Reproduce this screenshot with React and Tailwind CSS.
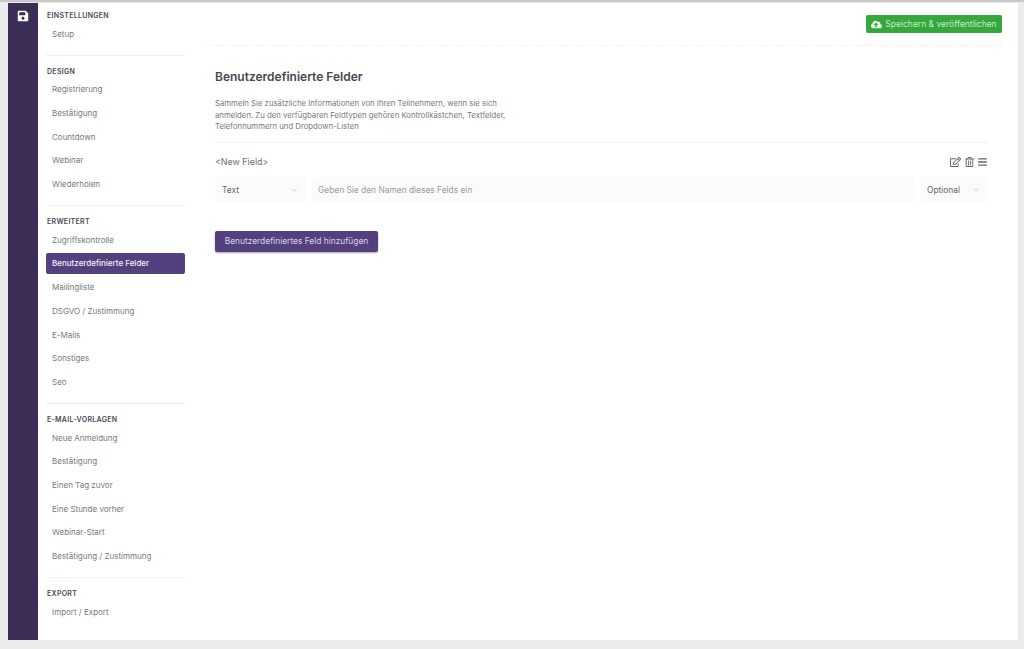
import { ChevronDown } from "lucide-react";
import { FaSave, FaCloudUploadAlt, FaRegEdit, FaRegTrashAlt, FaBars } from "react-icons/fa";

const sections = [
  { title: "Einstellungen", items: ["Setup"] },
  { title: "Design", items: ["Registrierung", "Bestätigung", "Countdown", "Webinar", "Wiederholen"] },
  {
    title: "Erweitert",
    items: ["Zugriffskontrolle", "Benutzerdefinierte Felder", "Mailingliste", "DSGVO / Zustimmung", "E-Mails", "Sonstiges", "Seo"],
  },
  {
    title: "E-Mail-Vorlagen",
    items: ["Neue Anmeldung", "Bestätigung", "Einen Tag zuvor", "Eine Stunde vorher", "Webinar-Start", "Bestätigung / Zustimmung"],
  },
  { title: "Export", items: ["Import / Export"] },
];

function Sidebar() {
  return (
    <aside className="w-[158px] shrink-0 pl-[8px] pr-[11px] pt-[6px]">
      {sections.map((section, i) => (
        <div key={section.title} className={i < sections.length - 1 ? "border-b border-[#f1f1f3] pb-[10px] mb-[9.25px]" : ""}>
          <div className="h-[14px] pl-[1px] leading-[14px] text-[7px] font-semibold uppercase tracking-[0.3px] text-[#4a4a52]">{section.title}</div>
          <ul className="mt-[0.5px] flex flex-col gap-[2.7px]">
            {section.items.map((item) => (
              <li
                key={item}
                className={
                  item === "Benutzerdefinierte Felder"
                    ? "h-[21px] pl-[6px] leading-[21px] text-[8px] font-medium rounded-[2px] bg-[#54407f] text-[#f1eef6]"
                    : "h-[21px] pl-[6px] leading-[21px] text-[8px] text-[#77777f]"
                }
              >
                {item}
              </li>
            ))}
          </ul>
        </div>
      ))}
    </aside>
  );
}

export default function App() {
  return (
    <div className="h-[649px] w-[1024px] overflow-hidden bg-[#ececec] pl-[8px] pr-[6px] pb-[8px] font-['Inter',sans-serif]">
      <div className="h-[3px] -ml-[8px] -mr-[6px] bg-[#c9c9c9] border-b border-[#e8e8e8]" />
      <div className="flex h-[637px] bg-white">
        <div className="w-[30px] shrink-0 bg-[#3c2d57] flex justify-center pt-[7px]">
          <FaSave className="w-[12px] h-[12px] text-white" />
        </div>
        <Sidebar />
        <main className="flex-1 pl-[10px] pr-[15px]">
          <div className="h-[43px] flex justify-end items-start pt-[12px] border-b border-dashed border-[#f0f0f2]">
            <button className="h-[18px] w-[136px] mr-[1px] flex items-center justify-center gap-[3px] rounded-[2px] bg-[#34a83c] text-[8.5px] text-[#c9ebcb]">
              <FaCloudUploadAlt className="w-[11px] h-[11px] text-[#e6f6e7]" />
              Speichern & veröffentlichen
            </button>
          </div>
          <div className="pl-[9px] pt-[23px]">
            <h1 className="text-[12px] leading-[16px] font-semibold text-[#47474f]">Benutzerdefinierte Felder</h1>
            <p className="mt-[13px] w-[300px] text-[7.76px] leading-[11.5px] text-[#77777f]">
              Sammeln Sie zusätzliche Informationen von Ihren Teilnehmern, wenn sie sich anmelden. Zu den verfügbaren Feldtypen gehören Kontrollkästchen, Textfelder, Telefonnummern und Dropdown-Listen
            </p>
            <div className="mt-[9px] mr-[16px] border-t border-[#f1f1f3]" />
            <div className="mt-[12px] mr-[16px] flex items-center justify-between h-[15px]">
              <span className="text-[8.9px] text-[#6b6b73]">{"<New Field>"}</span>
              <div className="flex items-center gap-[4px] text-[#66666d]">
                <FaRegEdit className="w-[11px] h-[10px]" />
                <FaRegTrashAlt className="w-[9px] h-[10px]" />
                <FaBars className="w-[9px] h-[10px]" />
              </div>
            </div>
            <div className="mt-[7px] mr-[16px] flex gap-[6px] h-[25px] text-[8.4px]">
              <div className="w-[91px] rounded-[2px] bg-[#fbfbfb] flex items-center justify-between pt-[2px] pl-[7px] pr-[7px] text-[#66666d]">
                Text
                <ChevronDown className="w-[10px] h-[10px] text-[#c4c4c8]" />
              </div>
              <div className="flex-1 rounded-[2px] bg-[#fbfbfb] flex items-center pt-[2px] pl-[6px] text-[#9a9aa0]">
                Geben Sie den Namen dieses Felds ein
              </div>
              <div className="w-[66px] rounded-[2px] bg-[#fbfbfb] flex items-center justify-between pt-[2px] pl-[6px] pr-[6px] text-[#66666d]">
                Optional
                <ChevronDown className="w-[10px] h-[10px] text-[#c4c4c8]" />
              </div>
            </div>
            <button className="block mt-[29px] h-[21px] w-[163px] rounded-[2px] bg-[#54407f] text-[8.4px] text-[#d9d3e6] shadow-[0_1px_2px_rgba(0,0,0,0.35)]">
              Benutzerdefiniertes Feld hinzufügen
            </button>
          </div>
        </main>
      </div>
    </div>
  );
}
